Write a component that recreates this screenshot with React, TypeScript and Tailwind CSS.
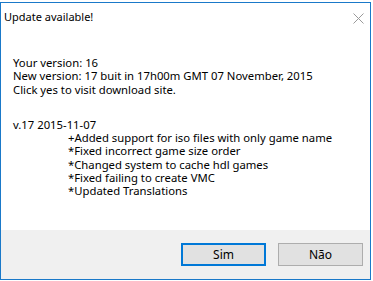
export default function App() {
  return (
    <div className="w-[373px] h-[281px] bg-white pt-[2px] font-['Noto_Sans',sans-serif] text-[11.3px] text-black">
      <div className="w-[371px] h-[278px] border border-[#1a79c9] bg-white flex flex-col">
        <div className="relative h-[42px]">
          <div className="absolute left-[3px] top-[6px] leading-4 text-[11px]">Update available!</div>
          <svg className="absolute left-[352px] top-[10px]" width="11" height="11" viewBox="0 0 11 11">
            <path d="M0.5 0.5 L10.5 10.5 M10.5 0.5 L0.5 10.5" stroke="#9a9a9a" strokeWidth="1" />
          </svg>
        </div>
        <div className="flex-1 pl-[12px] pt-[11px] leading-[13.3px]">
          <div>Your version: 16</div>
          <div>New version: 17 buit in 17h00m GMT 07 November, 2015</div>
          <div>Click yes to visit download site.</div>
          <div className="mt-[22px]">v.17 2015-11-07</div>
          <div className="pl-[55px]">
            <div>+Added support for iso files with only game name</div>
            <div>*Fixed incorrect game size order</div>
            <div>*Changed system to cache hdl games</div>
            <div>*Fixed failing to create VMC</div>
            <div>*Updated Translations</div>
          </div>
        </div>
        <div className="h-[49px] bg-[#f0f0f0] flex justify-end gap-[12px] pt-[13px] pr-[7px]">
          <button className="w-[85px] h-[23px] border-2 border-[#0078d7] bg-[#e1e1e1] leading-none text-[12px]">Sim</button>
          <button className="w-[85px] h-[23px] border border-[#adadad] bg-[#e1e1e1] leading-none text-[12px]">Não</button>
        </div>
      </div>
    </div>
  );
}
